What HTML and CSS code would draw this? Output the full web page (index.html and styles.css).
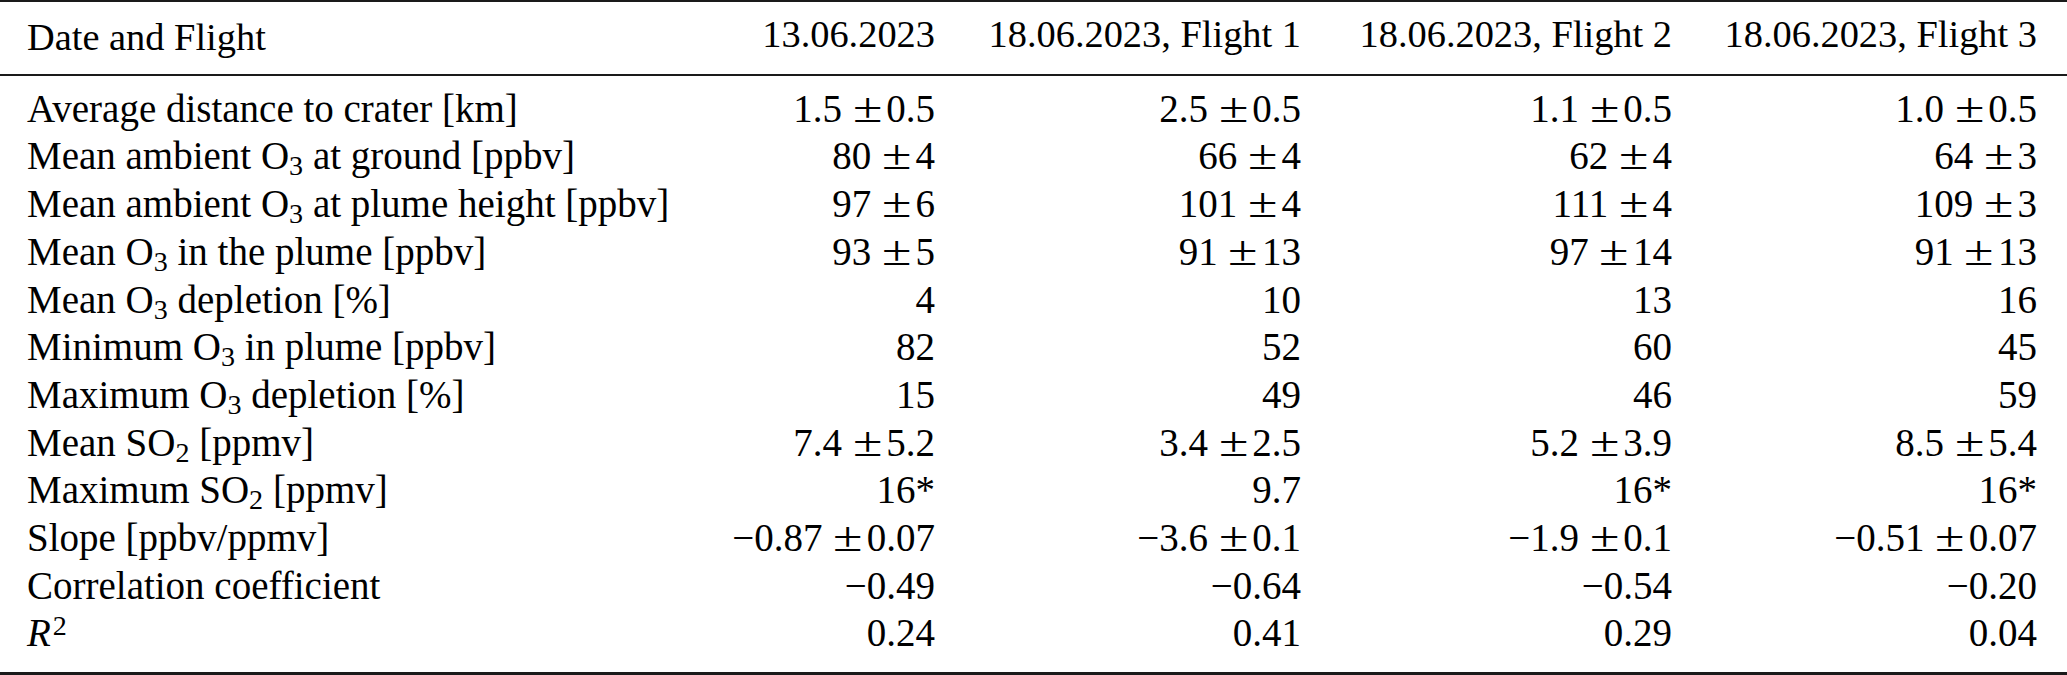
FILE: index.html
```html
<!DOCTYPE html>
<html lang="en">
<head>
	<meta charset="UTF-8">
	<title>Ozone depletion in the plume</title>
	<link rel="stylesheet" href="styles.css">
</head>
<body>
	<table class="results">
		<thead>
			<tr>
				<th class="label c0">Date and Flight</th>
				<th class="c1">13.06.2023</th>
				<th class="c2">18.06.2023, Flight 1</th>
				<th class="c3">18.06.2023, Flight 2</th>
				<th class="c4">18.06.2023, Flight 3</th>
			</tr>
		</thead>
		<tbody>
			<tr>
				<td class="label">Average distance to crater [km]</td>
				<td>1.5 <span class="pm">±</span>0.5</td>
				<td>2.5 <span class="pm">±</span>0.5</td>
				<td>1.1 <span class="pm">±</span>0.5</td>
				<td>1.0 <span class="pm">±</span>0.5</td>
			</tr>
			<tr>
				<td class="label">Mean ambient O<sub>3</sub> at ground [ppbv]</td>
				<td>80 <span class="pm">±</span>4</td>
				<td>66 <span class="pm">±</span>4</td>
				<td>62 <span class="pm">±</span>4</td>
				<td>64 <span class="pm">±</span>3</td>
			</tr>
			<tr>
				<td class="label">Mean ambient O<sub>3</sub> at plume height [ppbv]</td>
				<td>97 <span class="pm">±</span>6</td>
				<td>101 <span class="pm">±</span>4</td>
				<td>111 <span class="pm">±</span>4</td>
				<td>109 <span class="pm">±</span>3</td>
			</tr>
			<tr>
				<td class="label">Mean O<sub>3</sub> in the plume [ppbv]</td>
				<td>93 <span class="pm">±</span>5</td>
				<td>91 <span class="pm">±</span>13</td>
				<td>97 <span class="pm">±</span>14</td>
				<td>91 <span class="pm">±</span>13</td>
			</tr>
			<tr>
				<td class="label">Mean O<sub>3</sub> depletion [%]</td>
				<td>4</td>
				<td>10</td>
				<td>13</td>
				<td>16</td>
			</tr>
			<tr>
				<td class="label">Minimum O<sub>3</sub> in plume [ppbv]</td>
				<td>82</td>
				<td>52</td>
				<td>60</td>
				<td>45</td>
			</tr>
			<tr>
				<td class="label">Maximum O<sub>3</sub> depletion [%]</td>
				<td>15</td>
				<td>49</td>
				<td>46</td>
				<td>59</td>
			</tr>
			<tr>
				<td class="label">Mean SO<sub>2</sub> [ppmv]</td>
				<td>7.4 <span class="pm">±</span>5.2</td>
				<td>3.4 <span class="pm">±</span>2.5</td>
				<td>5.2 <span class="pm">±</span>3.9</td>
				<td>8.5 <span class="pm">±</span>5.4</td>
			</tr>
			<tr>
				<td class="label">Maximum SO<sub>2</sub> [ppmv]</td>
				<td>16*</td>
				<td>9.7</td>
				<td>16*</td>
				<td>16*</td>
			</tr>
			<tr>
				<td class="label">Slope [ppbv/ppmv]</td>
				<td>−0.87 <span class="pm">±</span>0.07</td>
				<td>−3.6 <span class="pm">±</span>0.1</td>
				<td>−1.9 <span class="pm">±</span>0.1</td>
				<td>−0.51 <span class="pm">±</span>0.07</td>
			</tr>
			<tr>
				<td class="label">Correlation coefficient</td>
				<td>−0.49</td>
				<td>−0.64</td>
				<td>−0.54</td>
				<td>−0.20</td>
			</tr>
			<tr>
				<td class="label"><i>R</i><sup>2</sup></td>
				<td>0.24</td>
				<td>0.41</td>
				<td>0.29</td>
				<td>0.04</td>
			</tr>
		</tbody>
	</table>
</body>
</html>
```

FILE: styles.css
```css
body{
	margin: 0;
	background: #fff;
	color: #000;
	font-family: "Liberation Serif", "Times New Roman", serif;
}
.results{
	width: 2067px;
	table-layout: fixed;
	border-collapse: separate;
	border-spacing: 0;
	font-size: 39px;
	line-height: 47.7px;
}
.results th,
.results td{
	box-sizing: border-box;
	padding: 0 30px 0 0;
	font-weight: normal;
	text-align: right;
	white-space: nowrap;
}
.results .label{
	text-align: left;
	padding: 0 0 0 27px;
}
.c0{width: 599px;}
.c1{width: 366px;}
.c2{width: 366px;}
.c3{width: 371px;}
.c4{width: 365px;}

/* rules */
.results thead th{
	font-size: 38.4px;
	border-top: 2px solid #1a1a1a;
	border-bottom: 2px solid #1a1a1a;
	padding-top: 9px;
	padding-bottom: 15.3px;
}
.results tbody tr:first-child td{
	padding-top: 8.7px;
}
.results tbody tr:last-child td{
	padding-bottom: 14.9px;
	border-bottom: 3px solid #1a1a1a;
}

sub, sup{
	font-size: 0.72em;
	line-height: 0;
}
sub{
	vertical-align: -0.2em;
}
sup{
	vertical-align: 0.42em;
	margin-left: 2px;
}
.pm{
	display: inline-block;
	font-size: 1.1em;
	line-height: 0;
	transform: scaleX(1.25);
	margin: 0 7px 0 4px;
}
```
